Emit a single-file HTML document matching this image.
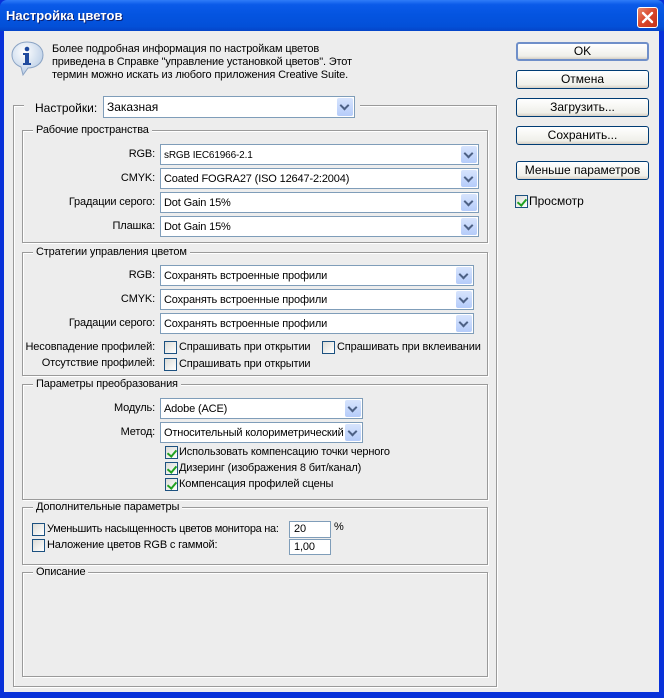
<!DOCTYPE html>
<html><head><meta charset="utf-8"><style>
*{margin:0;padding:0;box-sizing:border-box}
body{width:664px;height:698px;overflow:hidden;background:#0831d9;font-family:"Liberation Sans","DejaVu Sans",sans-serif;font-size:11px;letter-spacing:-0.15px;color:#000;position:relative}
.a{position:absolute}
#title{left:0;top:0;width:664px;height:31px;background:linear-gradient(#2f7cf8 0,#0a5ae8 15%,#0454e0 50%,#0350d8 85%,#0444c8 100%);border-radius:7px 7px 0 0}
#title span{position:absolute;left:6px;top:8px;color:#fff;font-weight:bold;font-size:13px;letter-spacing:0;text-shadow:1px 1px #0a1f70}
#close{left:637px;top:7px;width:21px;height:21px;border:1px solid #fff;border-radius:3px;background:linear-gradient(135deg,#e88a6c,#d9452a 50%,#c2321a)}
#body{left:4px;top:31px;width:655px;height:661px;background:#ededed}
.g{position:absolute;border:1px solid #9a9a9a;box-shadow:1px 1px 0 #fff, inset 1px 1px 0 #fff}
.lg{position:absolute;background:#ededed;padding:0 3px;top:-7px;left:10px;line-height:12px}
.sel{position:absolute;height:21px;border:1px solid #7f9db9;background:#fff;line-height:21px;padding-left:3px;white-space:nowrap;overflow:hidden}
.sel i{position:absolute;right:1px;top:1px;width:16px;bottom:1px;background:linear-gradient(#d7e4fd,#b5ccfa);border-radius:2px}
.sel i:after{content:"";position:absolute;left:4px;top:4px;width:5px;height:5px;border-right:2px solid #4d6185;border-bottom:2px solid #4d6185;transform:rotate(45deg)}
.lb{position:absolute;text-align:right;white-space:nowrap}
.cb{position:absolute;width:13px;height:13px;border:1px solid #1c5180;background:linear-gradient(135deg,#dcdcd7,#fff)}
.cb.on:after{content:"";position:absolute;left:3px;top:1px;width:4px;height:7px;border-right:2px solid #21a121;border-bottom:2px solid #21a121;transform:rotate(40deg)}
.t{position:absolute;white-space:nowrap}
.btn{position:absolute;left:516px;width:133px;height:19px;border:1px solid #003c74;border-radius:3px;background:linear-gradient(#fff,#f0f0ea 80%,#d6d0c5);text-align:center;line-height:17px;font-size:12px;letter-spacing:0}
.inp{position:absolute;border:1px solid #7f9db9;background:#fff;padding-left:4px;line-height:15px}
</style></head><body>
<div class="a" id="title"><span>Настройка цветов</span></div>
<div class="a" id="close"><svg width="19" height="19" viewBox="0 0 19 19"><path d="M5 5L14 14M14 5L5 14" stroke="#fff" stroke-width="2.4" stroke-linecap="round"/></svg></div>
<div class="a" id="body"></div>

<svg class="a" style="left:10px;top:40px" width="36" height="38" viewBox="0 0 36 38"><defs><radialGradient id="rg" cx="0.4" cy="0.3" r="0.7"><stop offset="0" stop-color="#fff"/><stop offset="1" stop-color="#b9cde6"/></radialGradient></defs><path d="M17 2C8 2 2 8 2 15c0 6 4 10 9 12l2 8 5-7c8 0 15-5 15-13S26 2 17 2z" fill="url(#rg)" stroke="#8aa3c4"/><circle cx="17" cy="9" r="2.3" fill="#1f4a9e"/><path d="M13 13h6v10h2v2h-8v-2h2v-8h-2z" fill="#1f4a9e"/></svg>
<div class="t" style="left:52px;top:43px;line-height:13px">Более подробная информация по настройкам цветов<br>приведена в Справке "управление установкой цветов". Этот<br>термин можно искать из любого приложения Creative Suite.</div>

<div class="g" style="left:13px;top:105px;width:484px;height:582px"></div>
<div class="a" style="left:24px;top:95px;width:336px;height:24px;background:#ededed"></div>
<div class="t" style="left:35px;top:101px;font-size:12px;letter-spacing:0">Настройки:</div>
<div class="sel" style="left:103px;top:96px;width:252px;height:22px;font-size:12px;letter-spacing:0">Заказная<i></i></div>

<div class="g" style="left:22px;top:130px;width:466px;height:113px"><div class="lg">Рабочие пространства</div></div>
<div class="lb" style="right:509px;top:148px">RGB:</div>
<div class="sel" style="left:160px;top:144px;width:319px;font-size:10px">sRGB IEC61966-2.1<i></i></div>
<div class="lb" style="right:509px;top:172px">CMYK:</div>
<div class="sel" style="left:160px;top:168px;width:319px">Coated FOGRA27 (ISO 12647-2:2004)<i></i></div>
<div class="lb" style="right:509px;top:196px">Градации серого:</div>
<div class="sel" style="left:160px;top:192px;width:319px">Dot Gain 15%<i></i></div>
<div class="lb" style="right:509px;top:220px">Плашка:</div>
<div class="sel" style="left:160px;top:216px;width:319px">Dot Gain 15%<i></i></div>

<div class="g" style="left:22px;top:252px;width:466px;height:124px"><div class="lg">Стратегии управления цветом</div></div>
<div class="lb" style="right:509px;top:269px">RGB:</div>
<div class="sel" style="left:160px;top:265px;width:314px">Сохранять встроенные профили<i></i></div>
<div class="lb" style="right:509px;top:293px">CMYK:</div>
<div class="sel" style="left:160px;top:289px;width:314px">Сохранять встроенные профили<i></i></div>
<div class="lb" style="right:509px;top:317px">Градации серого:</div>
<div class="sel" style="left:160px;top:313px;width:314px">Сохранять встроенные профили<i></i></div>
<div class="lb" style="right:509px;top:341px">Несовпадение профилей:</div>
<div class="cb" style="left:164px;top:341px"></div><div class="t" style="left:179px;top:341px">Спрашивать при открытии</div>
<div class="cb" style="left:322px;top:341px"></div><div class="t" style="left:337px;top:341px">Спрашивать при вклеивании</div>
<div class="lb" style="right:509px;top:357px">Отсутствие профилей:</div>
<div class="cb" style="left:164px;top:358px"></div><div class="t" style="left:179px;top:358px">Спрашивать при открытии</div>

<div class="g" style="left:22px;top:384px;width:466px;height:116px"><div class="lg">Параметры преобразования</div></div>
<div class="lb" style="right:509px;top:402px">Модуль:</div>
<div class="sel" style="left:160px;top:398px;width:203px">Adobe (ACE)<i></i></div>
<div class="lb" style="right:509px;top:426px">Метод:</div>
<div class="sel" style="left:160px;top:422px;width:203px">Относительный колориметрический<i></i></div>
<div class="cb on" style="left:165px;top:446px"></div><div class="t" style="left:179px;top:446px">Использовать компенсацию точки черного</div>
<div class="cb on" style="left:165px;top:462px"></div><div class="t" style="left:179px;top:462px">Дизеринг (изображения 8 бит/канал)</div>
<div class="cb on" style="left:165px;top:478px"></div><div class="t" style="left:179px;top:478px">Компенсация профилей сцены</div>

<div class="g" style="left:22px;top:507px;width:466px;height:58px"><div class="lg">Дополнительные параметры</div></div>
<div class="cb" style="left:32px;top:523px"></div><div class="t" style="left:47px;top:523px;letter-spacing:-0.3px">Уменьшить насыщенность цветов монитора на:</div>
<div class="inp" style="left:289px;top:521px;width:42px;height:17px">20</div><div class="t" style="left:334px;top:521px">%</div>
<div class="cb" style="left:32px;top:539px"></div><div class="t" style="left:47px;top:539px">Наложение цветов RGB с гаммой:</div>
<div class="inp" style="left:289px;top:539px;width:42px;height:16px">1,00</div>

<div class="g" style="left:22px;top:572px;width:466px;height:105px"><div class="lg">Описание</div></div>

<div class="btn" style="top:42px;border:2px solid #6f8fc9;line-height:15px">OK</div>
<div class="btn" style="top:70px">Отмена</div>
<div class="btn" style="top:98px">Загрузить...</div>
<div class="btn" style="top:126px">Сохранить...</div>
<div class="btn" style="top:161px">Меньше параметров</div>
<div class="cb on" style="left:515px;top:195px"></div><div class="t" style="left:529px;top:194px;font-size:12px;letter-spacing:0">Просмотр</div>
</body></html>
